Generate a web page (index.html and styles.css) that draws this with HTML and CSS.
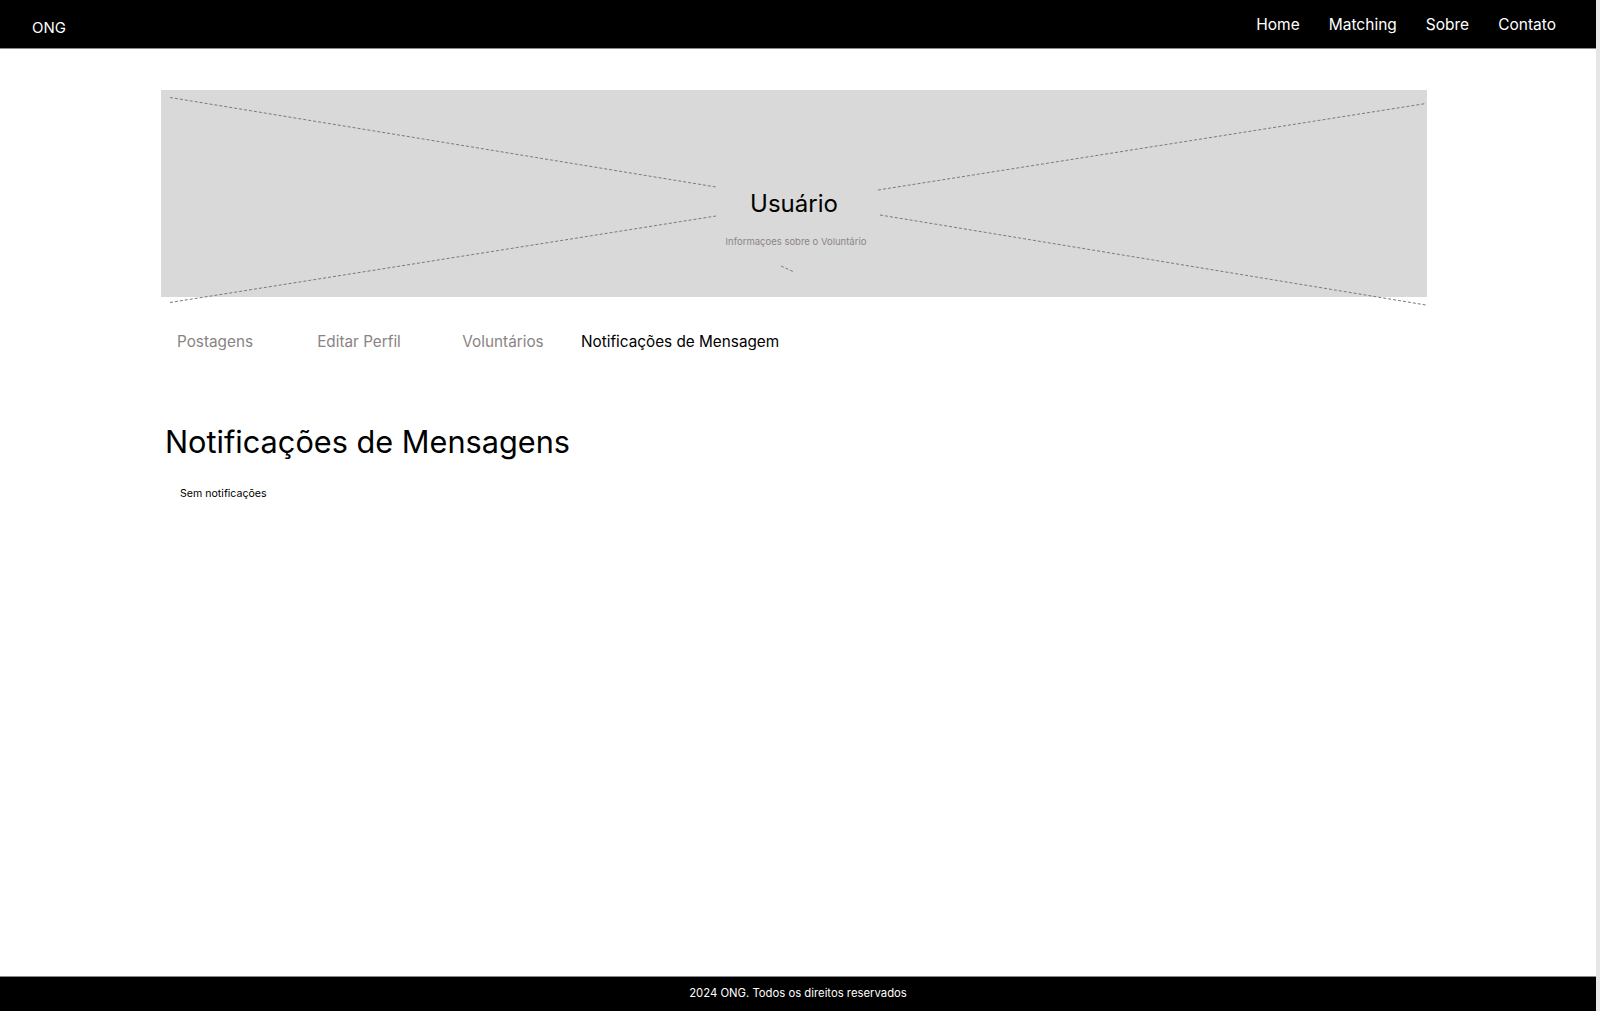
FILE: index.html
```html
<!DOCTYPE html>
<html lang="pt-BR">
<head>
<meta charset="utf-8">
<title>ONG - Usuário</title>
<link rel="stylesheet" href="styles.css">
</head>
<body>
<header class="topbar">
  <div class="brand">ONG</div>
  <nav class="nav">
    <a href="#">Home</a>
    <a href="#">Matching</a>
    <a href="#">Sobre</a>
    <a href="#">Contato</a>
  </nav>
</header>
<main class="main">
  <section class="banner">
    <svg class="banner-lines" width="1266" height="207" viewBox="0 0 1266 207">
      <g stroke="#7a7a7a" stroke-width="1" stroke-dasharray="3 2" fill="none">
        <line x1="9" y1="7.5" x2="555" y2="97"/>
        <line x1="9" y1="212.5" x2="555" y2="126"/>
        <line x1="717" y1="100" x2="1265" y2="13.5"/>
        <line x1="719" y1="125" x2="1265" y2="215"/>
        <line x1="620" y1="176" x2="633" y2="182"/>
      </g>
    </svg>
    <h1 class="banner-title">Usuário</h1>
    <p class="banner-sub">Informaçoes sobre o Voluntário</p>
  </section>
  <nav class="tabs">
    <a class="tab" href="#">Postagens</a>
    <a class="tab" href="#">Editar Perfil</a>
    <a class="tab" href="#">Voluntários</a>
    <a class="tab active" href="#">Notificações de Mensagem</a>
  </nav>
  <h2 class="section-title">Notificações de Mensagens</h2>
  <p class="empty">Sem notificações</p>
</main>
<footer class="footer">2024 ONG. Todos os direitos reservados</footer>
</body>
</html>
```

FILE: styles.css
```css
html {
  background: #e6e6e6;
}
body {
  margin: 0 4px 0 0;
  background: #ffffff;
  font-family: Inter, "Noto Sans", sans-serif;
  color: #000;
  min-height: 100vh;
  display: flex;
  flex-direction: column;
}
.topbar {
  height: 48px;
  background: #000;
  border-bottom: 1px solid #8a8a8a;
  display: flex;
  align-items: center;
  justify-content: space-between;
  padding: 0 40px 0 32px;
}
.brand {
  color: #fff;
  font-size: 15px;
  margin-top: 7px;
}
.nav {
  display: flex;
  gap: 29px;
  padding-top: 1px;
}
.nav a {
  color: #fff;
  text-decoration: none;
  font-size: 15.5px;
  line-height: 20px;
}
.main {
  flex: 1;
  padding: 41px 0 0 161px;
}
.banner {
  position: relative;
  width: 1266px;
  height: 207px;
  background: #d9d9d9;
  display: flex;
  flex-direction: column;
  align-items: center;
  box-sizing: border-box;
  padding-top: 99px;
}
.banner-lines {
  position: absolute;
  left: 0;
  top: 0;
  overflow: visible;
}
.banner-title {
  position: relative;
  margin: 0;
  font-size: 24px;
  font-weight: 400;
  line-height: 29px;
}
.banner-sub {
  position: relative;
  margin: 18px 0 0;
  font-size: 9.5px;
  line-height: 12px;
  color: #8c8585;
  padding-left: 4px;
}
.tabs {
  display: flex;
  margin: 35px 0 0 -18px;
}
.tab {
  min-width: 132px;
  padding: 0 6px;
  text-align: center;
  font-size: 15.3px;
  line-height: 20px;
  color: #8a8383;
  text-decoration: none;
}
.tab.active {
  color: #000;
}
.section-title {
  margin: 71px 0 0 4px;
  font-size: 30.7px;
  font-weight: 400;
  line-height: 37px;
}
.empty {
  margin: 27px 0 0 19px;
  font-size: 10.6px;
  line-height: 14px;
}
.footer {
  height: 32px;
  padding-bottom: 2px;
  background: #000;
  border-top: 1px solid #8a8a8a;
  color: #fff;
  font-size: 11.3px;
  line-height: 14px;
  display: flex;
  align-items: center;
  justify-content: center;
}
```
